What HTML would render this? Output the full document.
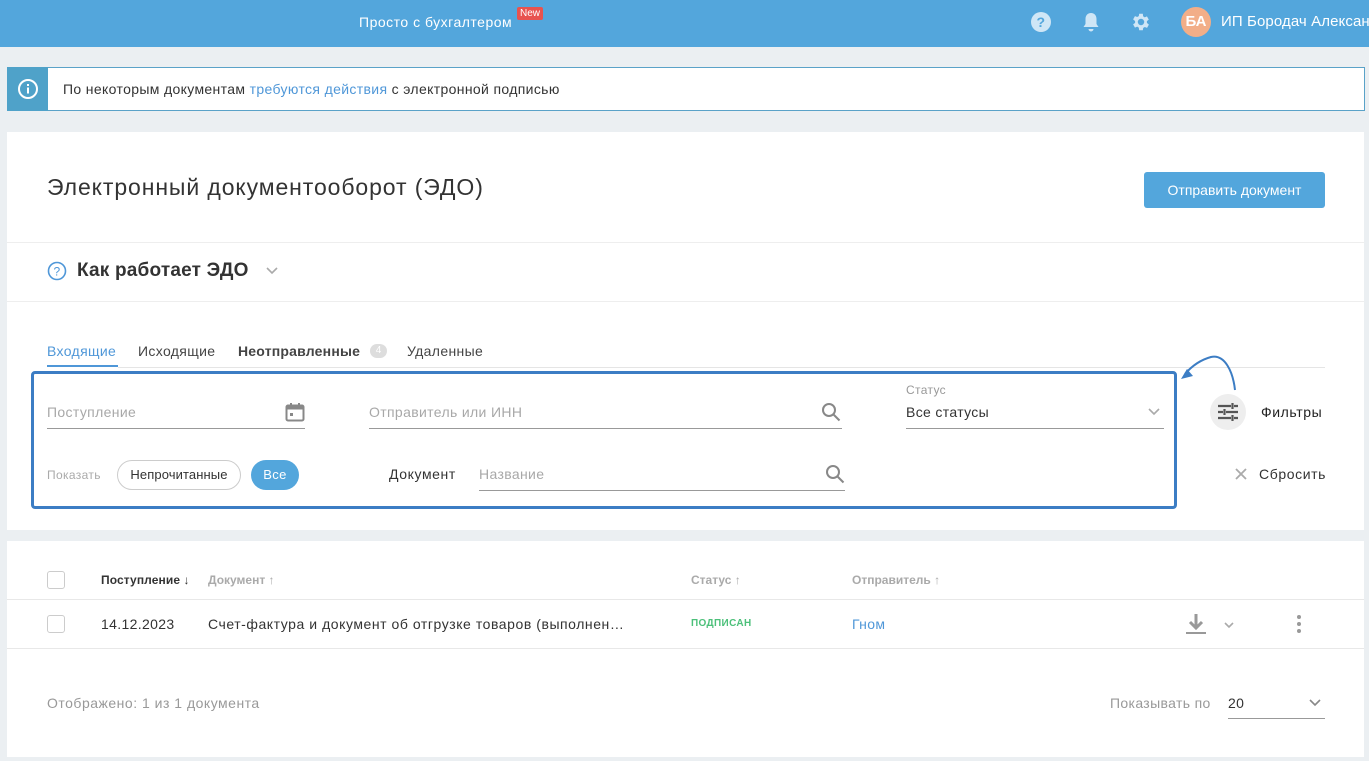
<!DOCTYPE html>
<html><head><meta charset="utf-8"><style>
*{box-sizing:border-box;margin:0;padding:0}
body{width:1369px;height:761px;overflow:hidden;background:#ebeff2;font-family:"Liberation Sans",sans-serif;color:#333;position:relative;letter-spacing:0.35px}
.a{position:absolute;white-space:nowrap}
.hdr{left:0;top:0;width:1369px;height:47px;background:#53a6dc}
.card{background:#fff;left:7px;width:1357px}
.ph{color:#a8a8a8;font-size:14px}
.line{height:1px;background:#999}
.th{font-size:12px;font-weight:bold;color:#aaa;letter-spacing:0}
</style></head><body>
<div class="a hdr"></div>
<div class="a" style="left:359px;top:14px;color:#fff;font-size:14px;letter-spacing:0.5px">Просто с бухгалтером</div>
<div class="a" style="left:517px;top:7px;background:#e8534f;color:#fff;font-size:10px;padding:1px 3px;border-radius:2px;letter-spacing:0">New</div>
<svg class="a" style="left:1030px;top:11px" width="22" height="22"><circle cx="11" cy="11" r="10" fill="#cfe6f6"/><text x="11" y="16" text-anchor="middle" font-size="14" font-weight="bold" fill="#53a6dc" font-family="Liberation Sans">?</text></svg>
<svg class="a" style="left:1082px;top:11px" width="18" height="22"><path d="M9 2c-3.5 0-5.5 2.5-5.5 6v5l-2 3h15l-2-3V8C14.5 4.5 12.5 2 9 2z M6.5 18h5a2.5 2.5 0 0 1-5 0z" fill="#cfe6f6"/></svg>
<svg class="a" style="left:1130px;top:11px" width="22" height="22" viewBox="0 0 24 24"><path fill="#cfe6f6" d="M19.4 13a7.5 7.5 0 0 0 0-2l2.1-1.6-2-3.5-2.5 1a7 7 0 0 0-1.7-1L15 3h-4l-.4 2.6a7 7 0 0 0-1.7 1l-2.5-1-2 3.5L6.6 11a7.5 7.5 0 0 0 0 2l-2.2 1.6 2 3.5 2.5-1a7 7 0 0 0 1.7 1L11 21h4l.4-2.6a7 7 0 0 0 1.7-1l2.5 1 2-3.5zM13 15.5a3.5 3.5 0 1 1 0-7 3.5 3.5 0 0 1 0 7z" transform="translate(-1 0)"/></svg>
<div class="a" style="left:1181px;top:7px;width:30px;height:30px;border-radius:50%;background:#f2ae88;color:#fff;font-weight:bold;font-size:15px;text-align:center;line-height:30px;letter-spacing:0">БА</div>
<div class="a" style="left:1221px;top:13px;color:#fff;font-size:15px;letter-spacing:0.1px">ИП Бородач Александр</div>

<div class="a" style="left:7px;top:67px;width:1358px;height:44px;background:#fff;border:1px solid #5aa2c8"></div>
<div class="a" style="left:7px;top:67px;width:41px;height:44px;background:#4fa2c9"></div>
<svg class="a" style="left:17px;top:78px" width="22" height="22"><circle cx="11" cy="11" r="9" fill="none" stroke="#fff" stroke-width="2"/><rect x="10" y="9.5" width="2" height="6" fill="#fff"/><rect x="10" y="6" width="2" height="2" fill="#fff"/></svg>
<div class="a" style="left:63px;top:81px;font-size:14px;color:#333">По некоторым документам <span style="color:#4f97d8">требуются действия</span> с электронной подписью</div>

<div class="a card" style="top:132px;height:398px"></div>
<div class="a" style="left:47px;top:174px;font-size:23px;color:#333;letter-spacing:0.9px">Электронный документооборот (ЭДО)</div>
<div class="a" style="left:1144px;top:172px;width:181px;height:36px;background:#53a6dc;border-radius:3px;color:#fff;font-size:14px;text-align:center;line-height:36px;letter-spacing:0">Отправить документ</div>
<div class="a" style="left:7px;top:242px;width:1357px;height:1px;background:#eee"></div>
<svg class="a" style="left:47px;top:261px" width="20" height="20"><circle cx="10" cy="10" r="8.5" fill="none" stroke="#4f97d8" stroke-width="1.6"/><text x="10" y="14.5" text-anchor="middle" font-size="12" fill="#4f97d8" font-family="Liberation Sans">?</text></svg>
<div class="a" style="left:77px;top:260px;font-size:19px;font-weight:bold;color:#333;letter-spacing:0.2px">Как работает ЭДО</div>
<svg class="a" style="left:265px;top:266px" width="14" height="10"><path d="M2 2l5 5 5-5" fill="none" stroke="#aaa" stroke-width="1.6"/></svg>
<div class="a" style="left:7px;top:301px;width:1357px;height:1px;background:#eee"></div>

<div class="a" style="left:47px;top:343px;font-size:14px;color:#4f97d8">Входящие</div>
<div class="a" style="left:47px;top:365px;width:71px;height:2px;background:#4f97d8"></div>
<div class="a" style="left:138px;top:343px;font-size:14px;color:#444">Исходящие</div>
<div class="a" style="left:238px;top:343px;font-size:14px;font-weight:bold;color:#444;letter-spacing:0.2px">Неотправленные</div>
<div class="a" style="left:370px;top:344px;width:17px;height:14px;border-radius:7px;background:#ddd;color:#fff;font-size:10px;text-align:center;line-height:14px;letter-spacing:0">4</div>
<div class="a" style="left:407px;top:343px;font-size:14px;color:#444">Удаленные</div>
<div class="a" style="left:118px;top:367px;width:1207px;height:1px;background:#e5e5e5"></div>

<div class="a" style="left:31px;top:371px;width:1146px;height:138px;border:3px solid #3c7dc4;border-radius:4px"></div>
<div class="a ph" style="left:47px;top:404px">Поступление</div>
<svg class="a" style="left:285px;top:402px" width="20" height="20"><rect x="1.5" y="3.5" width="17" height="15" rx="1.5" fill="none" stroke="#888" stroke-width="2"/><rect x="1.5" y="3.5" width="17" height="4" fill="#888"/><rect x="5" y="1" width="2" height="4" fill="#888"/><rect x="13" y="1" width="2" height="4" fill="#888"/><rect x="5" y="11" width="3" height="3" fill="#888"/></svg>
<div class="a line" style="left:47px;top:428px;width:258px"></div>
<div class="a ph" style="left:369px;top:404px">Отправитель или ИНН</div>
<svg class="a" style="left:821px;top:402px" width="20" height="20"><circle cx="8" cy="8" r="6" fill="none" stroke="#888" stroke-width="2"/><path d="M12.5 12.5l6 6" stroke="#888" stroke-width="2"/></svg>
<div class="a line" style="left:369px;top:428px;width:473px"></div>
<div class="a" style="left:906px;top:383px;font-size:12px;color:#999">Статус</div>
<div class="a" style="left:906px;top:404px;font-size:14px;color:#333">Все статусы</div>
<svg class="a" style="left:1147px;top:407px" width="14" height="10"><path d="M2 2l5 5 5-5" fill="none" stroke="#aaa" stroke-width="1.6"/></svg>
<div class="a line" style="left:906px;top:428px;width:258px"></div>
<div class="a" style="left:47px;top:468px;font-size:12px;color:#aaa">Показать</div>
<div class="a" style="left:117px;top:460px;width:124px;height:30px;border:1px solid #ccc;border-radius:15px;font-size:13px;text-align:center;line-height:28px;color:#333;letter-spacing:0.1px">Непрочитанные</div>
<div class="a" style="left:251px;top:460px;width:48px;height:30px;background:#53a6dc;border-radius:15px;font-size:13px;text-align:center;line-height:30px;color:#fff">Все</div>
<div class="a" style="left:389px;top:466px;font-size:14px;color:#333;letter-spacing:0.6px">Документ</div>
<div class="a ph" style="left:479px;top:466px">Название</div>
<svg class="a" style="left:825px;top:464px" width="20" height="20"><circle cx="8" cy="8" r="6" fill="none" stroke="#888" stroke-width="2"/><path d="M12.5 12.5l6 6" stroke="#888" stroke-width="2"/></svg>
<div class="a line" style="left:479px;top:490px;width:366px"></div>

<svg class="a" style="left:1175px;top:352px" width="70" height="40"><path d="M60 38C58 20 50 2 36 5 C25 8 16 15 10 22" fill="none" stroke="#3c7dc4" stroke-width="2"/><path d="M6 27l12-3-6-7z" fill="#3c7dc4"/></svg>
<div class="a" style="left:1210px;top:394px;width:36px;height:36px;border-radius:50%;background:#eee"></div>
<svg class="a" style="left:1217px;top:401px" width="22" height="22"><path d="M1 5h13M17 5h4M15.5 2v6M1 11h5M9 11h12M7.5 8v6M1 17h13M17 17h4M15.5 14v6" stroke="#555" stroke-width="2.2" fill="none"/></svg>
<div class="a" style="left:1261px;top:404px;font-size:14px;color:#222;letter-spacing:0.6px">Фильтры</div>
<svg class="a" style="left:1234px;top:467px" width="14" height="14"><path d="M2 2l10 10M12 2L2 12" stroke="#aaa" stroke-width="1.8"/></svg>
<div class="a" style="left:1259px;top:466px;font-size:14px;color:#333;letter-spacing:0.6px">Сбросить</div>

<div class="a card" style="top:541px;height:216px"></div>
<div class="a" style="left:47px;top:571px;width:18px;height:18px;border:1px solid #ccc;border-radius:3px"></div>
<div class="a" style="left:101px;top:573px;font-size:12px;font-weight:bold;color:#333;letter-spacing:0.1px">Поступление ↓</div>
<div class="a th" style="left:208px;top:573px">Документ ↑</div>
<div class="a th" style="left:691px;top:573px">Статус ↑</div>
<div class="a th" style="left:852px;top:573px">Отправитель ↑</div>
<div class="a" style="left:7px;top:599px;width:1357px;height:1px;background:#e8e8e8"></div>
<div class="a" style="left:47px;top:615px;width:18px;height:18px;border:1px solid #ccc;border-radius:3px"></div>
<div class="a" style="left:101px;top:616px;font-size:14px;color:#333">14.12.2023</div>
<div class="a" style="left:208px;top:616px;font-size:14px;color:#333;letter-spacing:0.55px">Счет-фактура и документ об отгрузке товаров (выполнен…</div>
<div class="a" style="left:691px;top:618px;font-size:10px;font-weight:bold;color:#4cc07a">ПОДПИСАН</div>
<div class="a" style="left:852px;top:616px;font-size:14px;color:#4f97d8">Гном</div>
<svg class="a" style="left:1185px;top:612px" width="22" height="24"><path d="M11 2v13M5 10l6 6 6-6" stroke="#999" stroke-width="3" fill="none"/><rect x="1" y="20" width="20" height="2" fill="#999"/></svg>
<svg class="a" style="left:1222px;top:620px" width="14" height="10"><path d="M3 3l4 4 4-4" fill="none" stroke="#aaa" stroke-width="1.6"/></svg>
<svg class="a" style="left:1295px;top:614px" width="8" height="20"><circle cx="4" cy="3" r="2" fill="#999"/><circle cx="4" cy="10" r="2" fill="#999"/><circle cx="4" cy="17" r="2" fill="#999"/></svg>
<div class="a" style="left:7px;top:648px;width:1357px;height:1px;background:#e8e8e8"></div>
<div class="a" style="left:47px;top:695px;font-size:14px;color:#999;letter-spacing:0.5px">Отображено: 1 из 1 документа</div>
<div class="a" style="left:1110px;top:695px;font-size:14px;color:#999">Показывать по</div>
<div class="a" style="left:1228px;top:695px;font-size:14px;color:#333">20</div>
<svg class="a" style="left:1308px;top:698px" width="14" height="10"><path d="M2 2l5 5 5-5" fill="none" stroke="#888" stroke-width="1.6"/></svg>
<div class="a line" style="left:1228px;top:718px;width:97px"></div>
</body></html>
